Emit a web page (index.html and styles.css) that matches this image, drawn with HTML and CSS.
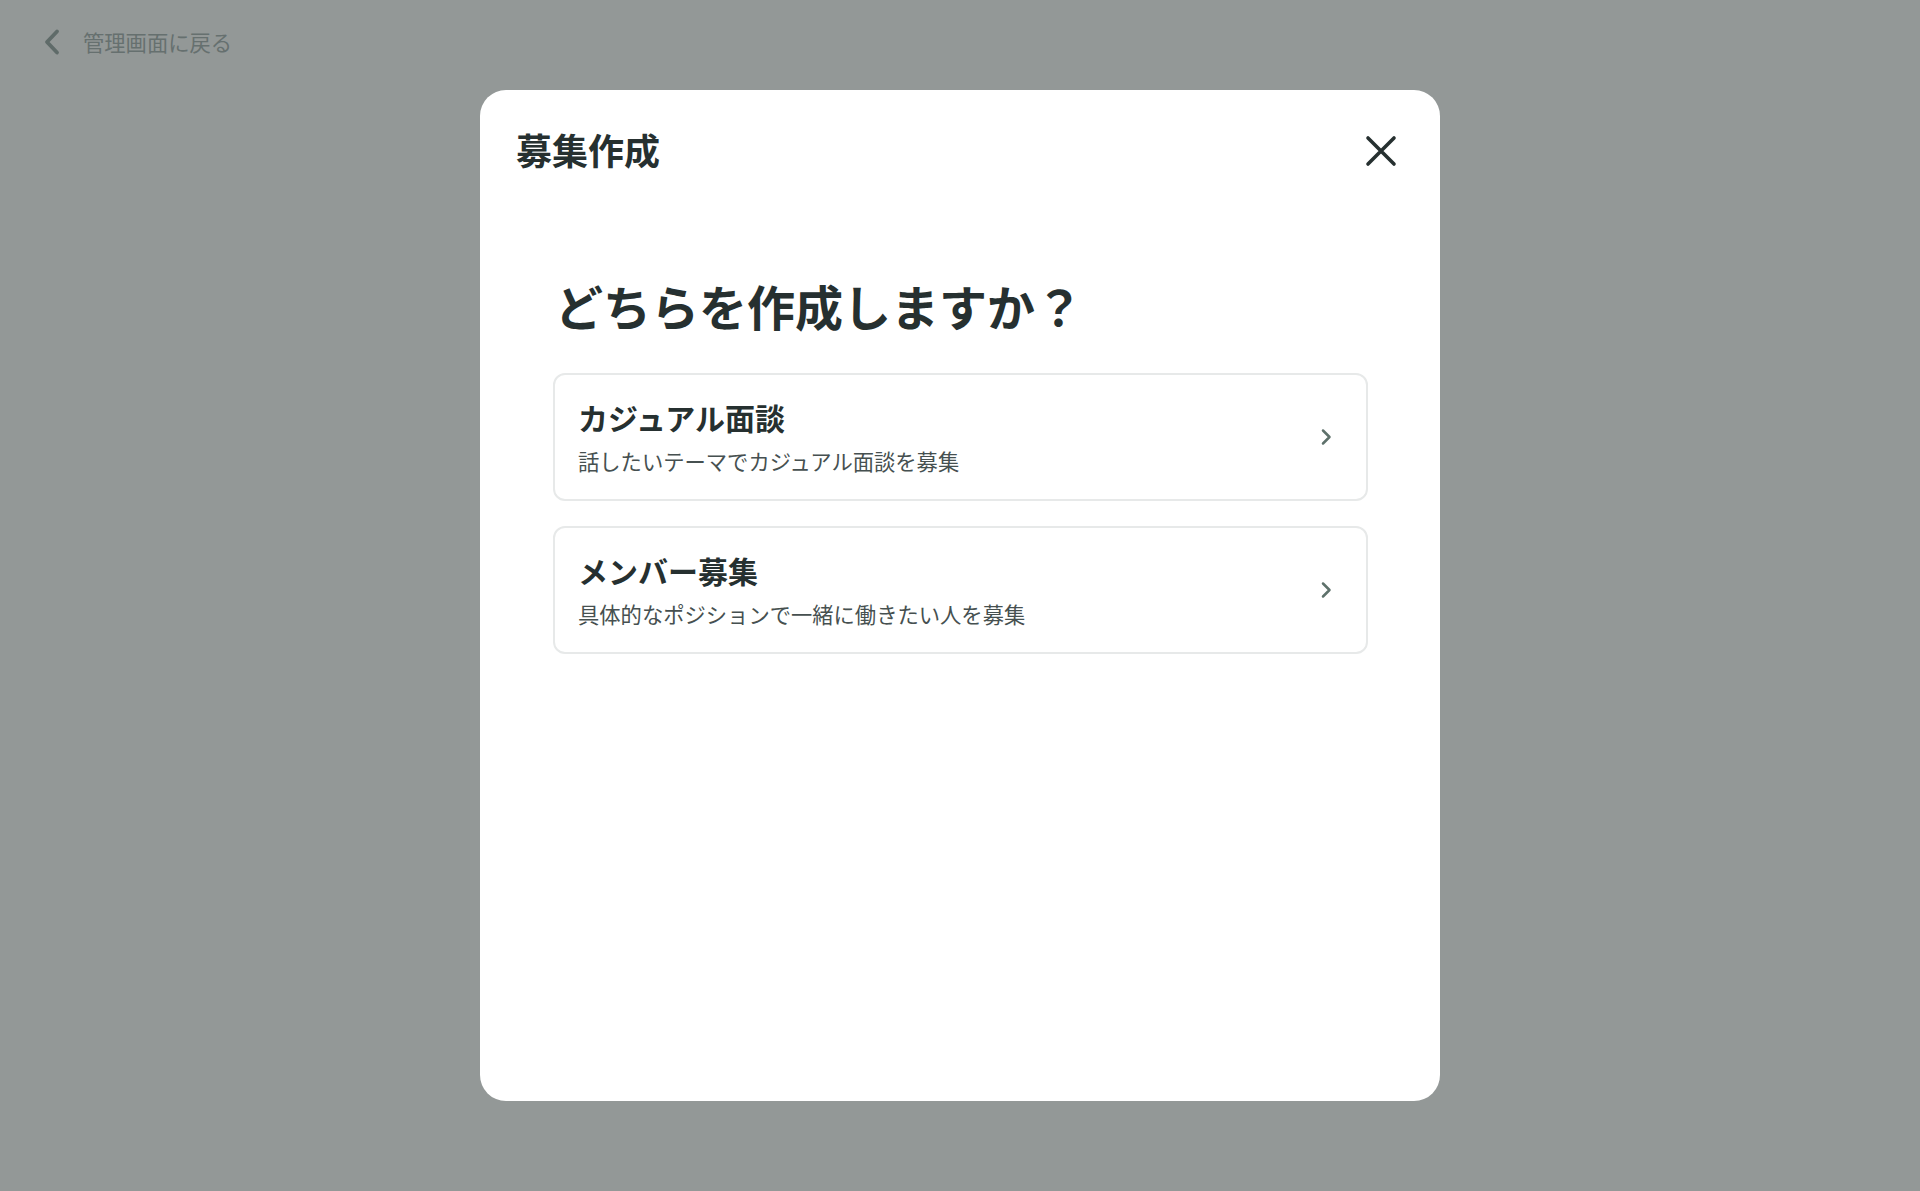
FILE: index.html
```html
<!DOCTYPE html>
<html lang="ja">
<head>
<meta charset="utf-8">
<title>募集作成</title>
<link rel="stylesheet" href="styles.css">
</head>
<body>
<div class="page">
  <a class="back" href="#">
    <svg class="back-icon" width="20" height="28" viewBox="0 0 20 28"><path d="M15 3.5 L5 14 L15 24.5" fill="none" stroke="#5f6b69" stroke-width="3.8" stroke-linecap="round" stroke-linejoin="round"/></svg>
    <span class="back-text">管理画面に戻る</span>
  </a>
  <div class="modal">
    <div class="modal-header">
      <h1 class="modal-title">募集作成</h1>
      <button class="close" aria-label="閉じる">
        <svg width="40" height="40" viewBox="0 0 40 40"><path d="M7 7 L33 33 M33 7 L7 33" fill="none" stroke="#263030" stroke-width="3.6" stroke-linecap="round"/></svg>
      </button>
    </div>
    <div class="modal-body">
      <h2 class="question">どちらを作成しますか？</h2>
      <div class="options">
        <a class="option" href="#">
          <div class="option-text">
            <div class="option-title">カジュアル面談</div>
            <div class="option-desc">話したいテーマでカジュアル面談を募集</div>
          </div>
          <svg class="chev" width="12" height="18" viewBox="0 0 12 18"><path d="M3 2.5 L9.5 9 L3 15.5" fill="none" stroke="#5e716b" stroke-width="2.5" stroke-linecap="round" stroke-linejoin="round"/></svg>
        </a>
        <a class="option" href="#">
          <div class="option-text">
            <div class="option-title">メンバー募集</div>
            <div class="option-desc">具体的なポジションで一緒に働きたい人を募集</div>
          </div>
          <svg class="chev" width="12" height="18" viewBox="0 0 12 18"><path d="M3 2.5 L9.5 9 L3 15.5" fill="none" stroke="#5e716b" stroke-width="2.5" stroke-linecap="round" stroke-linejoin="round"/></svg>
        </a>
      </div>
    </div>
  </div>
</div>
</body>
</html>
```
FILE: styles.css
```css
* { box-sizing: border-box; }
html, body {
  margin: 0;
  padding: 0;
  background: #939897;
  font-family: "Noto Sans CJK JP", "Noto Sans", sans-serif;
  color: #263030;
}
.page {
  width: 1920px;
  height: 1191px;
  display: flex;
  flex-direction: column;
}
.back {
  display: flex;
  align-items: center;
  gap: 21px;
  height: 90px;
  padding: 0 0 6px 42px;
  text-decoration: none;
  color: #66706f;
}
.back-icon { display: block; }
.back-text {
  font-size: 21.3px;
  line-height: 30px;
  color: #66706f;
}
.modal {
  width: 960px;
  height: 1011px;
  margin: 0 auto;
  background: #ffffff;
  border-radius: 26px;
  display: flex;
  flex-direction: column;
}
.modal-header {
  display: flex;
  align-items: center;
  justify-content: space-between;
  padding: 32px 39px 0 36px;
}
.modal-title {
  margin: 0;
  font-size: 36px;
  line-height: 54px;
  font-weight: 700;
  color: #263030;
}
.close {
  border: none;
  background: none;
  padding: 0;
  width: 40px;
  height: 40px;
  display: block;
  margin-top: 4px;
}
.close svg { display: block; }
.modal-body {
  padding: 0 72px 0 73px;
}
.question {
  margin: 96px 0 35px 2px;
  font-size: 48px;
  line-height: 66px;
  font-weight: 700;
  color: #263030;
}
.options {
  display: flex;
  flex-direction: column;
  gap: 25px;
}
.option {
  display: flex;
  align-items: center;
  justify-content: space-between;
  height: 128px;
  padding: 0 34px 0 23px;
  border: 2px solid #e7e9e9;
  border-radius: 12px;
  text-decoration: none;
  color: inherit;
}
.option-title {
  font-size: 30px;
  line-height: 42px;
  font-weight: 700;
  color: #263030;
  margin-top: -2px;
}
.option-desc {
  margin-top: 8px;
  font-size: 21.3px;
  line-height: 30px;
  color: #465050;
}
.chev { display: block; flex: none; }
```
